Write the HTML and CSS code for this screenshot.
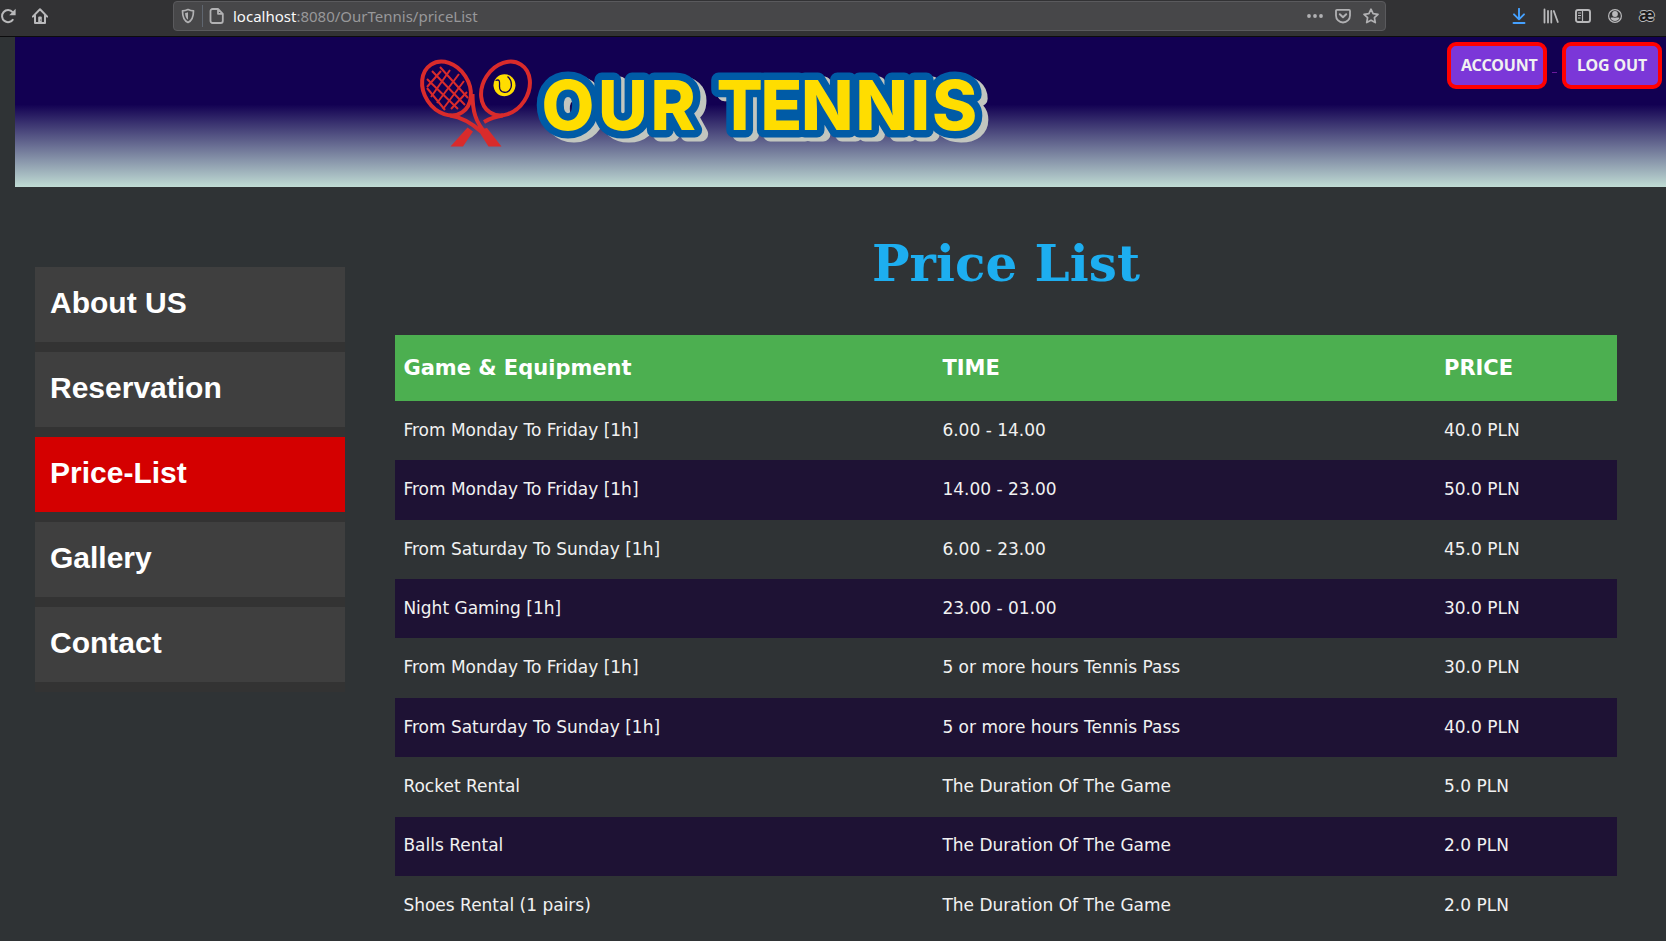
FILE: index.html
```html
<!DOCTYPE html>
<html lang="en">
<head>
<meta charset="utf-8">
<title>Our Tennis - Price List</title>
<link rel="stylesheet" href="styles.css">
</head>
<body>
<div class="toolbar">
  <svg class="icon reload" viewBox="0 0 16 16"><path d="M13.2 11.2A6 6 0 1 1 12.6 4.2" fill="none" stroke="#b9b9bb" stroke-width="2"/><path d="M15.6 .8V7.200H9.200Z" fill="#b9b9bb"/></svg>
  <svg class="icon home" viewBox="0 0 16 16"><path d="M.8 8.600 8 1.300l7.200 7.300M3 7.500V15h10V7.500" fill="none" stroke="#b9b9bb" stroke-width="2" stroke-linejoin="round" stroke-linecap="round"/><path d="M6.200 15V9.500a1 1 0 0 1 1-1h1.600a1 1 0 0 1 1 1V15Z" fill="#b9b9bb"/><circle cx="8.700" cy="12" r=".6" fill="#323234"/></svg>
  <div class="urlbar">
    <svg class="icon shield" viewBox="0 0 16 16"><path d="M8 1.500c2 .9 4 1.300 5.500 1.300C13.500 8 12.800 12.500 8 14.500 3.200 12.500 2.500 8 2.500 2.800 4 2.800 6 2.400 8 1.500Z" fill="none" stroke="#b1b1b3" stroke-width="1.700" stroke-linejoin="round"/><path d="M8 4.300v7.400C5.800 10.300 5.200 8 5.100 5.100 6.200 5 7.200 4.700 8 4.300Z" fill="#b1b1b3"/></svg>
    <span class="divider"></span>
    <svg class="icon page" viewBox="0 0 16 16"><path d="M3.500 1H9l4.800 4.800V13a2 2 0 0 1-2 2H3.500a2 2 0 0 1-2-2V3a2 2 0 0 1 2-2ZM9 1v4.800h4.800" fill="none" stroke="#b1b1b3" stroke-width="1.800" stroke-linejoin="round"/></svg>
    <span class="url"><b>localhost</b>:8080/OurTennis/priceList</span>
    <svg class="icon" viewBox="0 0 16 16"><g fill="#b1b1b3"><circle cx="2" cy="8" r="1.900"/><circle cx="8" cy="8" r="1.900"/><circle cx="14" cy="8" r="1.900"/></g></svg>
    <svg class="icon pocket" viewBox="0 0 16 16"><path d="M2 1.900h12a1 1 0 0 1 1 1V7.500a7 7 0 0 1-14 0V2.900a1 1 0 0 1 1-1Z" fill="none" stroke="#b1b1b3" stroke-width="1.800"/><path d="m4.800 6.200 3.200 3 3.200-3" fill="none" stroke="#b1b1b3" stroke-width="2" stroke-linecap="round" stroke-linejoin="round"/></svg>
    <svg class="icon star" viewBox="0 0 16 16"><path d="m8 1.200 2.100 4.500 4.900.6-3.600 3.400.9 4.900L8 12.200l-4.300 2.400.9-4.900L1 6.300l4.900-.6Z" fill="none" stroke="#b1b1b3" stroke-width="1.700" stroke-linejoin="round"/></svg>
  </div>
  <div class="tools">
    <svg class="icon" viewBox="0 0 16 16"><path d="M8 .8v10M3 6.300l5 5 5-5M2.500 15h11" fill="none" stroke="#45a1ff" stroke-width="1.900" stroke-linecap="round" stroke-linejoin="round"/></svg>
    <svg class="icon" viewBox="0 0 16 16"><path d="M1.500 1.500v13M5 3v11.500M8.300 3v11.500M10.800 3l4 11" fill="none" stroke="#b9b9bb" stroke-width="1.800" stroke-linecap="round"/></svg>
    <svg class="icon" viewBox="0 0 16 16"><rect x="1" y="2" width="14" height="12" rx="2" fill="none" stroke="#b9b9bb" stroke-width="1.900"/><path d="M7.500 2v12M3 5h3M3 7.500h3M3 10h2.500" stroke="#b9b9bb" stroke-width="1.200"/></svg>
    <svg class="icon" viewBox="0 0 16 16"><circle cx="8" cy="8" r="6.400" fill="none" stroke="#b9b9bb" stroke-width="1.200"/><circle cx="8" cy="6" r="2.900" fill="#b9b9bb"/><path d="M3.500 10c1.500-.8 2.500-.2 4.500-.2s3-.6 4.500.2A5 5 0 0 1 8 13a5 5 0 0 1-4.500-3Z" fill="#b9b9bb"/></svg>
    <span class="ae">æ</span>
  </div>
</div>
<header class="banner">
  <svg class="logo" viewBox="410 50 590 110" role="img" aria-label="Our Tennis">
    <g fill="none" stroke="#d92b2b">
      <ellipse cx="446.500" cy="88.500" rx="22.500" ry="28.500" transform="rotate(-33 446.500 88.500)" stroke-width="4"/>
      <ellipse cx="505.500" cy="88.500" rx="22.500" ry="28.500" transform="rotate(33 505.500 88.500)" stroke-width="4"/>
      <path d="M427 79l31 30M432 71l33 34M440 67l28 31M427 88l18 22" stroke-width="2"/>
      <path d="M427 87l14-16M431 97l19-27M437 103l22-29M443 109l21-28M451 109l16-17" stroke-width="2"/>
      <path d="M450 115.500c13 2 22 8 31 16M472.500 94c0 17 3 28 13 39" stroke-width="4"/>
      <path d="M503 115.500c-7 1-13 3-19 6.500" stroke-width="4"/>
    </g>
    <path d="M478 130l9-2 14.500 18.500h-13ZM467.500 127.500l5.500 4-10 15h-12.500Z" fill="#d92b2b"/>
    <circle cx="504.500" cy="85.200" r="11" fill="#fd0"/>
    <path d="M495.500 80.500c5-2 4 2 4 6 0 7 9 8 11.500 1 1-4 0-8-3.500-11" fill="none" stroke="#120052" stroke-width="1.300"/>
    <g class="word word-shadow" aria-hidden="true" transform="translate(6 4)">
      <use href="#our-tennis"/>
    </g>
    <g class="word word-outline" aria-hidden="true"><use href="#our-tennis"/></g>
    <g class="word word-face"><text id="our-tennis" y="129.600" x="541.500 598 650.500 676 716.500 760.500 801 855.500 910.500 932">OUR TENNIS</text></g>
  </svg>
  <div class="session">
    <a class="btn account">ACCOUNT</a><span class="gap"></span><a class="btn logout">LOG OUT</a>
  </div>
</header>
<div class="layout">
  <nav class="menu">
    <a>About US</a><a>Reservation</a><a class="active">Price-List</a><a>Gallery</a><a>Contact</a>
  </nav>
  <main>
    <h1>Price List</h1>
    <table>
      <colgroup><col class="c1"><col class="c2"><col class="c3"></colgroup>
      <thead><tr><th>Game &amp; Equipment</th><th>TIME</th><th>PRICE</th></tr></thead>
      <tbody>
        <tr><td>From Monday To Friday [1h]</td><td>6.00 - 14.00</td><td>40.0 PLN</td></tr>
        <tr><td>From Monday To Friday [1h]</td><td>14.00 - 23.00</td><td>50.0 PLN</td></tr>
        <tr><td>From Saturday To Sunday [1h]</td><td>6.00 - 23.00</td><td>45.0 PLN</td></tr>
        <tr><td>Night Gaming [1h]</td><td>23.00 - 01.00</td><td>30.0 PLN</td></tr>
        <tr><td>From Monday To Friday [1h]</td><td>5 or more hours Tennis Pass</td><td>30.0 PLN</td></tr>
        <tr><td>From Saturday To Sunday [1h]</td><td>5 or more hours Tennis Pass</td><td>40.0 PLN</td></tr>
        <tr><td>Rocket Rental</td><td>The Duration Of The Game</td><td>5.0 PLN</td></tr>
        <tr><td>Balls Rental</td><td>The Duration Of The Game</td><td>2.0 PLN</td></tr>
        <tr><td>Shoes Rental (1 pairs)</td><td>The Duration Of The Game</td><td>2.0 PLN</td></tr>
      </tbody>
    </table>
  </main>
</div>
</body>
</html>
```
FILE: styles.css
```css
* { box-sizing: border-box; }
body { margin: 0; height: 941px; overflow: hidden; background: #2f3335; color: #f1f1f1; font-family: "DejaVu Sans", sans-serif; }
.toolbar { display: flex; align-items: flex-start; height: 37px; background: #323234; border-bottom: 1px solid #0c0c0d; }
.icon { display: block; flex: none; width: 16px; height: 16px; }
.toolbar > .icon { margin-top: 8px; }
.home { margin-left: 16px; }
.urlbar { display: flex; align-items: center; width: 1213px; height: 30px; margin: 1px 0 0 125px; padding: 0 6px; background: #474749; border: 1px solid #5a5a5d; border-radius: 4px; }
.divider { width: 1px; height: 22px; margin: 0 6px; background: #5f6670; }
.url { flex: 1; margin-left: 8px; font: 15px "Noto Sans", sans-serif; color: #98989a; white-space: nowrap; }
.url b { font-weight: 400; color: #f9f9fa; }
.pocket { margin-left: 12px; }
.star { margin: 0 0 0 12px; }
.tools { display: flex; gap: 16px; margin: 8px 0 0 125px; }
.ae { width: 16px; font: 700 17px/14px "Noto Sans", sans-serif; color: #1a1a1b; text-shadow: 1px 0 #b9b9bb, -1px 0 #b9b9bb, 0 1px #b9b9bb, 0 -1px #b9b9bb; }
.banner { display: flex; justify-content: space-between; align-items: flex-start; height: 150px; margin-left: 15px; background: linear-gradient(#120052 45%, #c0dcd4); }
.logo { width: 590px; height: 110px; margin: 13px 0 0 395px; }
.word { font: 800 68.500px Inter, sans-serif; stroke-linejoin: round; }
.word-shadow { fill: #c2c6bf; stroke: #c2c6bf; stroke-width: 15px; }
.word-outline { fill: #005ba6; stroke: #005ba6; stroke-width: 15px; }
.word-face { fill: #fd0; }
.session { display: flex; margin: 5px 4px 0 0; }
.btn { width: 100px; height: 47px; padding-left: 10px; border: 4px solid #f00; border-radius: 9px; background: #7b37d8; color: #f1f1f1; font: 700 16px/38px "Noto Sans", sans-serif; letter-spacing: -.15px; white-space: nowrap; }
.btn.logout { padding-left: 11px; }
.gap { width: 5px; height: 1px; margin: 30px 5px 0; background: #6a1a9b; }
.layout { display: flex; align-items: flex-start; padding-left: 35px; }
.menu { width: 310px; margin-top: 80px; background: #333; }
.menu a { display: block; height: 75px; margin-bottom: 10px; padding-left: 15px; background: #3f3f3f; color: #fff; font: 700 30px/72px "Liberation Sans", Arial, sans-serif; }
.menu a.active { background: #d40000; }
main { width: 1222px; margin-left: 50px; }
h1 { margin: 47px 0 41px; height: 60px; font: 700 50px/60px "DejaVu Serif", serif; color: #1daef0; text-align: center; }
table { width: 1222px; table-layout: fixed; border-collapse: collapse; }
.c1 { width: 539px; }
.c2 { width: 501.600px; }
th, td { padding: 0 8px 0 8.400px; text-align: left; }
th { height: 66px; background: #4caf50; color: #fff; font-size: 21px; }
td { height: 59.370px; padding-bottom: 1.500px; font-size: 17px; }
tbody tr:nth-child(even) { background: #1e1234; }
```
